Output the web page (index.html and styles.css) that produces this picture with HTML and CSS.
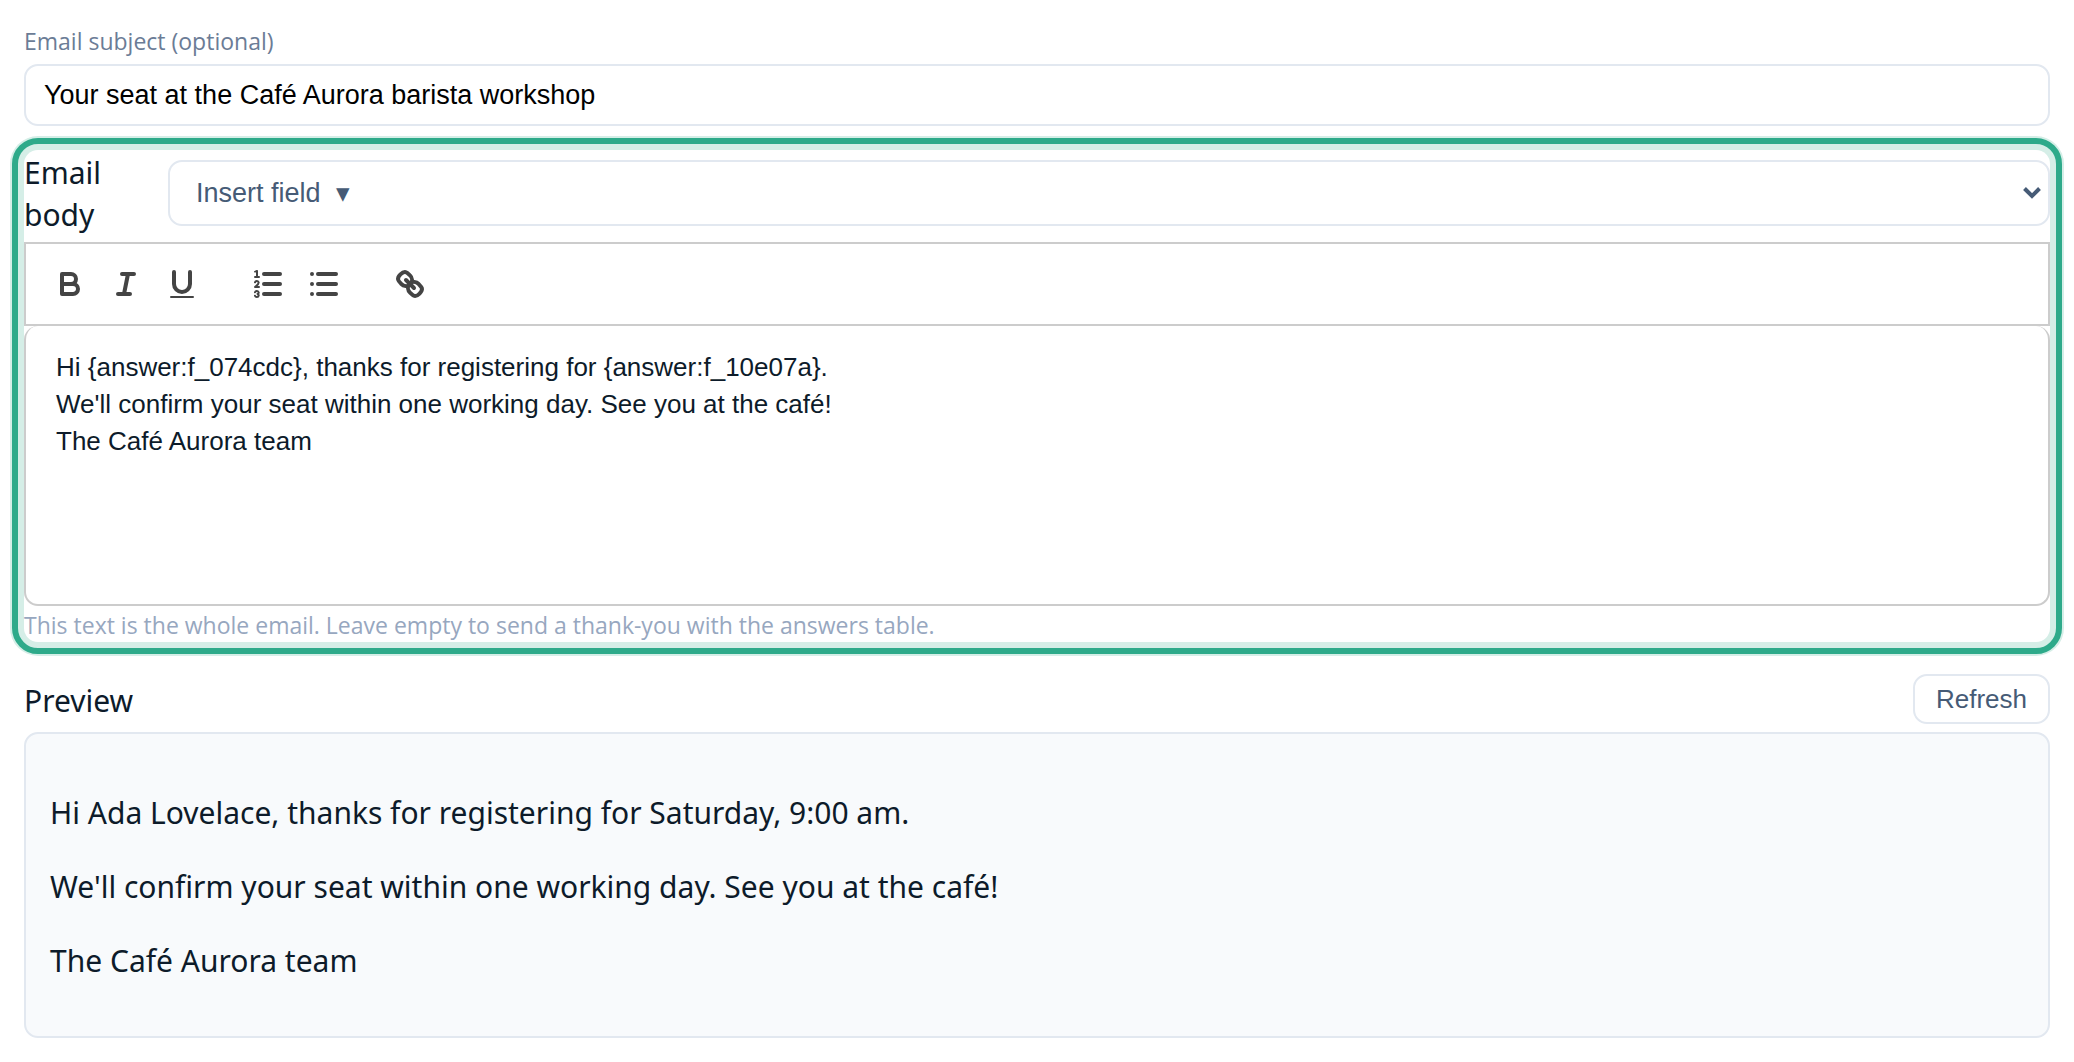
FILE: index.html
```html
<!DOCTYPE html>
<html lang="en">
<head>
<meta charset="utf-8">
<title>Email settings</title>
<link rel="stylesheet" href="styles.css">
</head>
<body>
<form class="email-form">
  <div class="subject">
    <label class="subject-label" for="subject">Email subject (optional)</label>
    <input class="subject-input" id="subject" type="text" value="Your seat at the Café Aurora barista workshop">
  </div>

  <section class="body-field">
    <div class="body-head">
      <label class="body-label" id="body-label" for="insert-field">Email body</label>
      <div class="select-wrap">
        <select class="insert-select" id="insert-field">
          <option>Insert field&nbsp; ▾</option>
        </select>
        <svg class="select-arrow" viewBox="0 0 18 14" aria-hidden="true"><path d="M1.5 2.5 9 10l7.500-7.500"/></svg>
      </div>
    </div>
    <div class="toolbar" role="toolbar" aria-label="Formatting">
      <div class="tool-group">
        <button class="tool" type="button" aria-label="Bold"><svg viewBox="0 0 18 18"><path d="M5,4H9.5A2.5,2.5,0,0,1,12,6.500v0A2.5,2.5,0,0,1,9.500,9H5Z"/><path d="M5,9h5.500A2.5,2.5,0,0,1,13,11.500v0A2.5,2.5,0,0,1,10.500,14H5Z"/></svg></button>
        <button class="tool" type="button" aria-label="Italic"><svg viewBox="0 0 18 18"><path d="M7,4H13M5,14H11M8,14L10,4"/></svg></button>
        <button class="tool" type="button" aria-label="Underline"><svg viewBox="0 0 18 18"><path d="M5,3V9a4.012,4.012,0,0,0,4,4H9a4.012,4.012,0,0,0,4-4V3"/><rect class="solid" x="3" y="15" width="12" height="1" rx=".5"/></svg></button>
      </div>
      <div class="tool-group">
        <button class="tool" type="button" aria-label="Numbered list"><svg viewBox="0 0 18 18"><path d="M7,4H15M7,9H15M7,14H15"/><path class="thin" d="M2.5,5.500H4.500"/><path class="solid" d="M3.5,6A0.5,0.5,0,0,1,3,5.500V3.085l-0.276.138A0.5,0.5,0,0,1,2.053,3c-0.124-.247-0.023-0.324.224-0.447l1-.5A0.5,0.5,0,0,1,4,2.500v3A0.5,0.5,0,0,1,3.500,6Z"/><path class="thin" d="M4.5,10.500h-2c0-.234,1.850-1.076,1.850-2.234A0.959,0.959,0,0,0,2.500,8.156"/><path class="thin" d="M2.5,14.846a0.959,0.959,0,0,0,1.850-.109A0.7,0.7,0,0,0,3.750,14a0.688,0.688,0,0,0,.6-0.736,0.959,0.959,0,0,0-1.850-.109"/></svg></button>
        <button class="tool" type="button" aria-label="Bulleted list"><svg viewBox="0 0 18 18"><path d="M6,4H15M6,9H15M6,14H15M3,4H3M3,9H3M3,14H3"/></svg></button>
      </div>
      <div class="tool-group">
        <button class="tool" type="button" aria-label="Link"><svg viewBox="0 0 18 18"><path d="M7,7L11,11"/><path d="M8.9,4.577a3.476,3.476,0,0,1,.36,4.679A3.476,3.476,0,0,1,4.577,8.900C3.185,7.500,2.035,6.400,4.217,4.217S7.500,3.185,8.900,4.577Z"/><path d="M13.423,9.100a3.476,3.476,0,0,0-4.679-.36,3.476,3.476,0,0,0,.36,4.679c1.392,1.392,2.500,2.542,4.679.36S14.815,10.500,13.423,9.100Z"/></svg></button>
      </div>
    </div>
    <div class="editor" role="textbox" aria-multiline="true" aria-labelledby="body-label" contenteditable="true" spellcheck="false">
      <p>Hi {answer:f_074cdc}, thanks for registering for {answer:f_10e07a}.</p>
      <p>We'll confirm your seat within one working day. See you at the café!</p>
      <p>The Café Aurora team</p>
    </div>
    <p class="hint">This text is the whole email. Leave empty to send a thank-you with the answers table.</p>
  </section>

  <section class="preview">
    <div class="preview-head">
      <h2 class="preview-title">Preview</h2>
      <button class="refresh" type="button">Refresh</button>
    </div>
    <div class="preview-box">
      <p>Hi Ada Lovelace, thanks for registering for Saturday, 9:00 am.</p>
      <p>We'll confirm your seat within one working day. See you at the café!</p>
      <p>The Café Aurora team</p>
    </div>
  </section>
</form>
</body>
</html>
```
FILE: styles.css
```css
:root {
  --ink: #0d1b2a;
  --slate: #465b76;
  --line: #e2e8f0;
  --rule: #cccccc;
  --accent: #2eaa8a;
  --accent-soft: #d5eee7;
  --ui: "Segoe UI", "Noto Sans", sans-serif;
  --ui-small: "Segoe UI", "Open Sans", sans-serif;
  --control: Arial, "Liberation Sans", sans-serif;
}

* { box-sizing: border-box; }

body {
  margin: 0;
  padding: 24px;
  background: #fff;
  color: var(--ink);
  font: 30px/42px var(--ui);
}

p, h2 { margin: 0; }

.email-form {
  display: flex;
  flex-direction: column;
}

.subject {
  display: flex;
  flex-direction: column;
  gap: 6px;
}

.subject-label {
  color: #6b7c96;
  font: 23px/34px var(--ui-small);
}

.subject-input {
  width: 100%;
  height: 62px;
  padding: 0 18px;
  border: 2px solid var(--line);
  border-radius: 14px;
  background: #fff;
  color: #000;
  font: 27px/32px var(--control);
}

.body-field {
  margin-top: 24px;
  border-radius: 14px;
  outline: 6px solid var(--accent);
  outline-offset: 6px;
  box-shadow: 0 0 0 14px var(--accent-soft);
}

.body-head {
  display: flex;
  align-items: flex-end;
  gap: 16px;
  padding-top: 2px;
}

.body-label {
  flex: 0 0 128px;
  padding: 0 40px 6px 0;
}

.select-wrap {
  position: relative;
  flex: 1;
  display: flex;
  margin-bottom: 16px;
}

.insert-select {
  appearance: none;
  width: 100%;
  height: 66px;
  padding: 0 26px;
  border: 2px solid var(--line);
  border-radius: 14px;
  background: #fff;
  color: var(--slate);
  font: 27px/32px var(--control);
}

.select-arrow {
  position: absolute;
  top: 26px;
  right: 9px;
  width: 18px;
  height: 14px;
  fill: none;
  stroke: var(--slate);
  stroke-width: 4;
  pointer-events: none;
}

.toolbar {
  display: flex;
  gap: 30px;
  padding: 16px;
  border: 2px solid var(--rule);
}

.tool-group { display: flex; }

.tool {
  width: 56px;
  height: 48px;
  padding: 6px 10px;
  border: 0;
  background: none;
}

.tool svg {
  display: block;
  width: 36px;
  height: 36px;
  fill: none;
  stroke: #444;
  stroke-width: 2;
  stroke-linecap: round;
  stroke-linejoin: round;
}

.tool .thin { stroke-width: 1; }

.tool .solid {
  fill: #444;
  stroke: none;
}

.editor {
  min-height: 280px;
  padding: 23px 30px;
  border: 2px solid var(--rule);
  border-top: 0;
  border-radius: 14px;
  font: 26px/37px Helvetica, "Liberation Sans", sans-serif;
}

.hint {
  padding: 3px 0 1px;
  color: #97a7bf;
  font: 23px/32px var(--ui-small);
}

.preview { margin-top: 32px; }

.preview-head {
  display: flex;
  align-items: center;
  justify-content: space-between;
  margin-bottom: 8px;
}

.preview-title {
  padding-top: 4px;
  font-size: 30px;
  font-weight: 400;
}

.refresh {
  height: 50px;
  padding: 0 21px;
  border: 2px solid var(--line);
  border-radius: 14px;
  background: #fff;
  color: var(--slate);
  font: 26px/32px var(--control);
}

.preview-box {
  display: flex;
  flex-direction: column;
  gap: 32px;
  padding: 58px 24px 54px;
  border: 2px solid var(--line);
  border-radius: 14px;
  background: #f8fafc;
}
```
